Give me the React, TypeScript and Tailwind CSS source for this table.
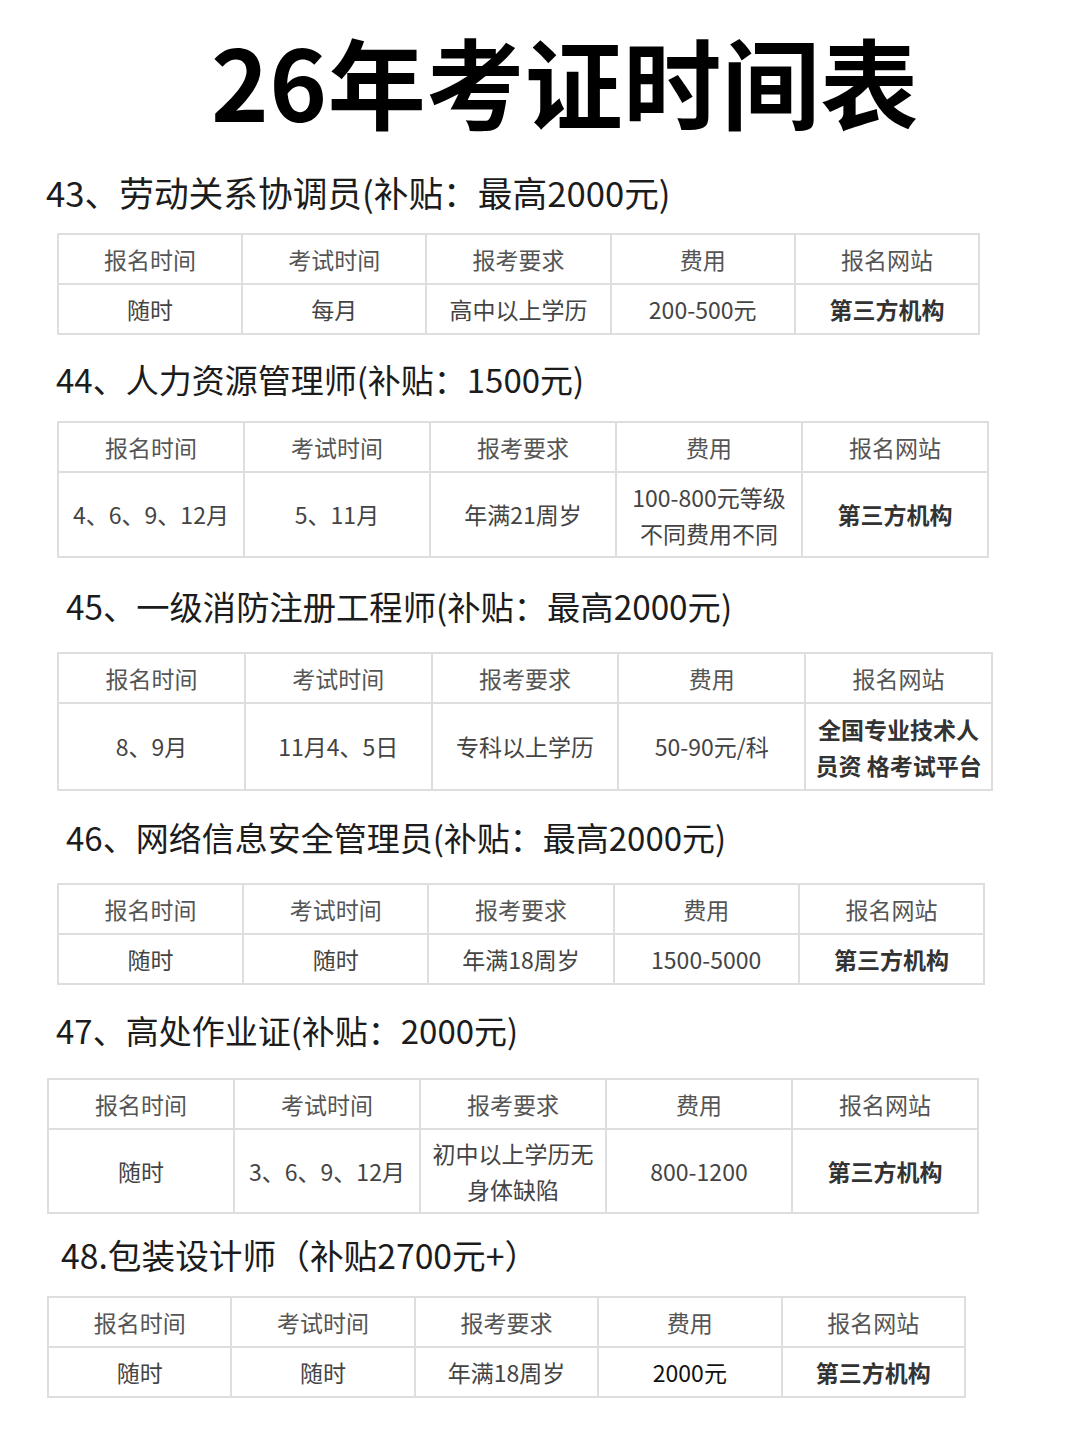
import React from "react";

type Section = {
  title: string;
  titleCls: string;
  mt: string;
  tableMt: string;
  tableMl: string;
  tableW: string;
  rowH: string;
  cells: React.ReactNode[];
};

const headers = ["报名时间", "考试时间", "报考要求", "费用", "报名网站"];

const two = (a: string, b: string) => (
  <span className="flex flex-col leading-[36px]">
    <span>{a}</span>
    <span>{b}</span>
  </span>
);

const sections: Section[] = [
  {
    title: "43、劳动关系协调员(补贴：最高2000元)",
    titleCls: "ml-[46px] text-[34.7px]",
    mt: "mt-0",
    tableMt: "mt-[19px]",
    tableMl: "ml-[57px]",
    tableW: "w-[923px]",
    rowH: "h-[50px]",
    cells: ["随时", "每月", "高中以上学历", "200-500元", "第三方机构"],
  },
  {
    title: "44、人力资源管理师(补贴：1500元)",
    titleCls: "ml-[56px] text-[33px]",
    mt: "mt-[22px]",
    tableMt: "mt-[20px]",
    tableMl: "ml-[57px]",
    tableW: "w-[932px]",
    rowH: "h-[85px]",
    cells: ["4、6、9、12月", "5、11月", "年满21周岁", two("100-800元等级", "不同费用不同"), "第三方机构"],
  },
  {
    title: "45、一级消防注册工程师(补贴：最高2000元)",
    titleCls: "ml-[66px] text-[33.3px]",
    mt: "mt-[26px]",
    tableMt: "mt-[24px]",
    tableMl: "ml-[57px]",
    tableW: "w-[936px]",
    rowH: "h-[87px]",
    cells: ["8、9月", "11月4、5日", "专科以上学历", "50-90元/科", two("全国专业技术人", "员资 格考试平台")],
  },
  {
    title: "46、网络信息安全管理员(补贴：最高2000元)",
    titleCls: "ml-[66px] text-[33px]",
    mt: "mt-[24px]",
    tableMt: "mt-[24px]",
    tableMl: "ml-[57px]",
    tableW: "w-[928px]",
    rowH: "h-[50px]",
    cells: ["随时", "随时", "年满18周岁", "1500-5000", "第三方机构"],
  },
  {
    title: "47、高处作业证(补贴：2000元)",
    titleCls: "ml-[56px] text-[33px]",
    mt: "mt-[23px]",
    tableMt: "mt-[26px]",
    tableMl: "ml-[47px]",
    tableW: "w-[932px]",
    rowH: "h-[84px]",
    cells: ["随时", "3、6、9、12月", two("初中以上学历无", "身体缺陷"), "800-1200", "第三方机构"],
  },
  {
    title: "48.包装设计师（补贴2700元+）",
    titleCls: "ml-[61px] text-[33.7px]",
    mt: "mt-[19px]",
    tableMt: "mt-[19px]",
    tableMl: "ml-[47px]",
    tableW: "w-[919px]",
    rowH: "h-[50px]",
    cells: ["随时", "随时", "年满18周岁", <span className="text-[#111]">2000元</span>, "第三方机构"],
  },
];

export default function App() {
  return (
    <div
      className="w-[1080px] h-[1440px] bg-white flex flex-col"
      style={{ fontFamily: '"Noto Sans CJK SC", "Noto Sans", sans-serif' }}
    >
      <div className="h-[170px] flex items-center pl-[211px] pb-[12px]">
        <h1 className="text-[98px] leading-none font-bold text-black tracking-[0.5px]">26年考证时间表</h1>
      </div>
      {sections.map((s, i) => (
        <section key={i} className={`flex flex-col ${s.mt}`}>
          <h2 className={`${s.titleCls} leading-[44px] text-[#1c1c1c] font-normal`}>{s.title}</h2>
          <table className={`${s.tableMt} ${s.tableMl} ${s.tableW} table-fixed border-collapse text-[23px]`}>
            <tbody>
              <tr className="h-[50px]">
                {headers.map((h) => (
                  <td key={h} className="border-2 border-[#dedede] text-center align-middle text-[#555] leading-none">
                    {h}
                  </td>
                ))}
              </tr>
              <tr className={s.rowH}>
                {s.cells.map((c, j) => (
                  <td
                    key={j}
                    className={`border-2 border-[#dedede] text-center align-middle leading-none ${
                      j === 4 ? "font-bold text-[#333]" : "text-[#444]"
                    }`}
                  >
                    <div className="flex justify-center">{c}</div>
                  </td>
                ))}
              </tr>
            </tbody>
          </table>
        </section>
      ))}
    </div>
  );
}
